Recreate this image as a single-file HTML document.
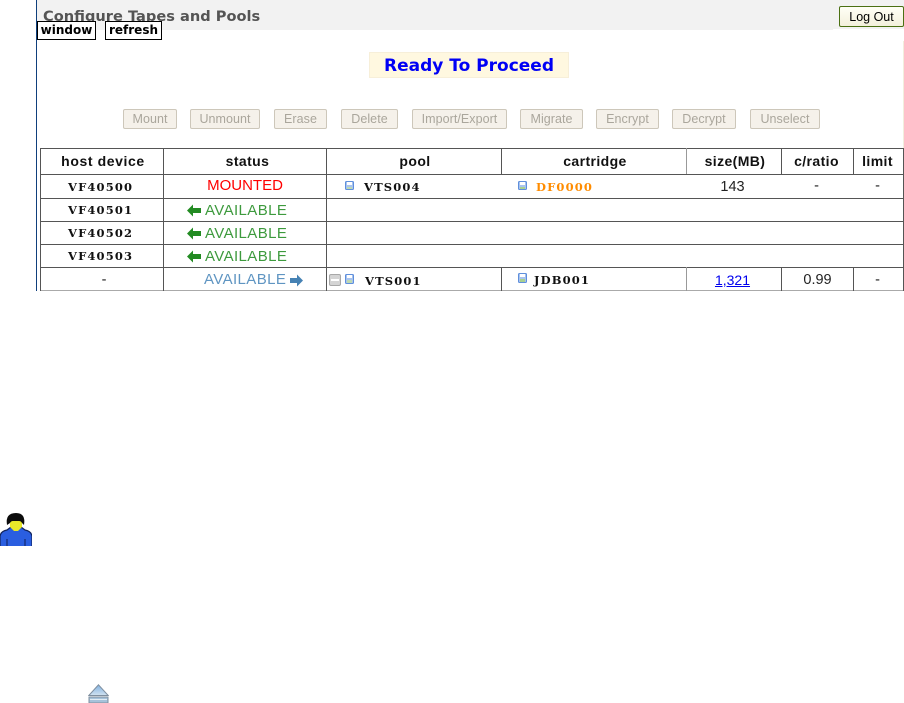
<!DOCTYPE html>
<html><head><meta charset="utf-8">
<style>
html,body{margin:0;padding:0;background:#fff;width:904px;height:703px;overflow:hidden;position:relative}
div,a,svg{position:absolute}
.t{white-space:nowrap;line-height:1}
.hl{background:#555;height:1px}
.vl{background:#555;width:1px}
.btn{top:109px;height:18px;border:1px solid #cdc7ba;border-radius:2px;background:#f5f1ea;color:#aaa69c;font:12.5px/18px "Liberation Sans",sans-serif;text-align:center;letter-spacing:.05px}
.th{top:153px;font:bold 14px/16px "Liberation Sans",sans-serif;color:#111;text-align:center;letter-spacing:.4px}
.m{font:bold 11.5px/14px "DejaVu Serif",serif;color:#111;letter-spacing:1.15px;white-space:nowrap}
.s{font:15px/16px "Liberation Sans",sans-serif;white-space:nowrap;text-align:center;letter-spacing:.4px}
.g{color:#3d9a3d}
.c{font:14.5px/16px "Liberation Sans",sans-serif;color:#222;text-align:center}
</style></head><body>
<div style="left:36px;top:0;width:1px;height:291px;background:#0f3f7c"></div>
<div style="left:37px;top:0;width:796px;height:30px;background:#f2f2f2"></div>
<div style="left:833px;top:0;width:71px;height:29px;background:#f2f2f2"></div>
<div class="t" style="left:43px;top:8px;font:bold 14.6px/17px 'DejaVu Sans',sans-serif;color:#555">Configure Tapes and Pools</div>
<div class="t" style="left:37px;top:21px;width:57px;height:17px;border:1px solid #000;background:#fff;font:bold 12px/17px 'DejaVu Sans',sans-serif;color:#000;text-align:center">window</div>
<div class="t" style="left:105px;top:21px;width:55px;height:17px;border:1px solid #000;background:#fff;font:bold 12px/17px 'DejaVu Sans',sans-serif;color:#000;text-align:center">refresh</div>
<div class="t" style="left:839px;top:6px;width:63px;height:19px;border:1px solid #4b7013;border-radius:2px;background:linear-gradient(#fffff6,#f3f0dc);font:12.5px/20px 'Liberation Sans',sans-serif;color:#000;text-align:center">Log Out</div>
<div style="left:903px;top:41px;width:1px;height:107px;background:#f2eedd"></div>

<div class="t" style="left:369px;top:52px;width:198px;height:24px;border:1px solid #f7efd9;background:#fff8e0;font:bold 17px/26px 'DejaVu Sans',sans-serif;color:#0000f5;text-align:center">Ready To Proceed</div>

<div class="btn" style="left:123px;width:52px">Mount</div>
<div class="btn" style="left:190px;width:68px">Unmount</div>
<div class="btn" style="left:274px;width:51px">Erase</div>
<div class="btn" style="left:341px;width:55px">Delete</div>
<div class="btn" style="left:412px;width:93px">Import/Export</div>
<div class="btn" style="left:520px;width:61px">Migrate</div>
<div class="btn" style="left:596px;width:61px">Encrypt</div>
<div class="btn" style="left:672px;width:62px">Decrypt</div>
<div class="btn" style="left:750px;width:68px">Unselect</div>

<!-- grid -->
<div class="hl" style="left:40px;top:148px;width:864px"></div>
<div class="hl" style="left:40px;top:174px;width:864px"></div>
<div class="hl" style="left:40px;top:198px;width:864px"></div>
<div class="hl" style="left:40px;top:221px;width:864px"></div>
<div class="hl" style="left:40px;top:244px;width:864px"></div>
<div class="hl" style="left:40px;top:267px;width:864px"></div>
<div class="hl" style="left:40px;top:290px;width:864px;background:#aaa"></div>
<div class="vl" style="left:40px;top:148px;height:143px"></div>
<div class="vl" style="left:163px;top:148px;height:143px"></div>
<div class="vl" style="left:326px;top:148px;height:143px"></div>
<div class="vl" style="left:903px;top:148px;height:143px"></div>
<div class="vl" style="left:501px;top:148px;height:26px"></div>
<div class="vl" style="left:686px;top:148px;height:26px;background:#999"></div>
<div class="vl" style="left:781px;top:148px;height:26px"></div>
<div class="vl" style="left:853px;top:148px;height:26px"></div>
<div class="vl" style="left:501px;top:267px;height:24px"></div>
<div class="vl" style="left:686px;top:267px;height:24px;background:#999"></div>
<div class="vl" style="left:781px;top:267px;height:24px"></div>
<div class="vl" style="left:853px;top:267px;height:24px"></div>

<!-- head -->
<div class="th" style="left:42px;width:122px;letter-spacing:.6px">host device</div>
<div class="th" style="left:164px;width:167px">status</div>
<div class="th" style="left:328px;width:174px">pool</div>
<div class="th" style="left:500px;width:190px">cartridge</div>
<div class="th" style="left:688px;width:94px">size(MB)</div>
<div class="th" style="left:781px;width:71px">c/ratio</div>
<div class="th" style="left:853px;width:49px">limit</div>

<!-- col 1 -->
<div class="m" style="left:68px;top:180px">VF40500</div>
<div class="m" style="left:68px;top:203px">VF40501</div>
<div class="m" style="left:68px;top:226px">VF40502</div>
<div class="m" style="left:68px;top:249px">VF40503</div>
<div class="c" style="left:43px;top:272px;width:122px">-</div>

<!-- status -->
<div class="s" style="left:164px;top:178px;width:162px;color:#f00;letter-spacing:0">MOUNTED</div>
<svg style="left:187px;top:204px" width="14" height="13" viewBox="0 0 14 13"><path d="M0 6.5 6 0.5V4H14V9H6V12.5Z" fill="#228b22"/></svg>
<div class="s g" style="left:205px;top:203px">AVAILABLE</div>
<svg style="left:187px;top:227px" width="14" height="13" viewBox="0 0 14 13"><path d="M0 6.5 6 0.5V4H14V9H6V12.5Z" fill="#228b22"/></svg>
<div class="s g" style="left:205px;top:226px">AVAILABLE</div>
<svg style="left:187px;top:250px" width="14" height="13" viewBox="0 0 14 13"><path d="M0 6.5 6 0.5V4H14V9H6V12.5Z" fill="#228b22"/></svg>
<div class="s g" style="left:205px;top:249px">AVAILABLE</div>
<div class="s" style="left:204px;top:272px;color:#5f95c2">AVAILABLE</div>
<svg style="left:290px;top:274px" width="13" height="13" viewBox="0 0 13 13"><path d="M13 6.5 7 0.5V4H0V9H7V12.5Z" fill="#4682b4"/></svg>

<!-- pool -->
<svg style="left:345px;top:181px" width="9" height="9" viewBox="0 0 9 9"><rect x=".5" y=".5" width="8" height="8" rx="1" fill="#a9c4ee" stroke="#5f8fdc"/><rect x="2" y="1" width="5" height="3" fill="#fff"/><rect x="2" y="6" width="5" height="2" fill="#bfd9b0"/></svg>
<div class="m" style="left:364px;top:180px">VTS004</div>
<svg style="left:518px;top:181px" width="9" height="9" viewBox="0 0 9 9"><rect x=".5" y=".5" width="8" height="8" rx="1" fill="#a9c4ee" stroke="#5f8fdc"/><rect x="2" y="1" width="5" height="3" fill="#fff"/><rect x="2" y="6" width="5" height="2" fill="#a8d090"/></svg>
<div class="m" style="left:536px;top:180px;color:#ff8c00">DF0000</div>

<svg style="left:329px;top:274px" width="12" height="12" viewBox="0 0 12 12"><rect x=".5" y=".5" width="11" height="11" rx="1.5" fill="#d4d4d4" stroke="#a8a8a8"/><rect x="2" y="5" width="8" height="2" fill="#fff"/></svg>
<svg style="left:345px;top:274px" width="9" height="10" viewBox="0 0 9 10"><rect x=".5" y=".5" width="8" height="9" rx="1" fill="#a9c4ee" stroke="#5f8fdc"/><rect x="2" y="1" width="5" height="3" fill="#fff"/><rect x="2" y="6" width="5" height="3" fill="#bfd9b0"/></svg>
<div class="m" style="left:365px;top:274px">VTS001</div>
<svg style="left:518px;top:273px" width="9" height="10" viewBox="0 0 9 10"><rect x=".5" y=".5" width="8" height="9" rx="1" fill="#a9c4ee" stroke="#5f8fdc"/><rect x="2" y="1" width="5" height="3" fill="#fff"/><rect x="2" y="6" width="5" height="3" fill="#a8d090"/></svg>
<div class="m" style="left:534px;top:273px">JDB001</div>

<!-- numbers -->
<div class="c" style="left:687px;top:179px;width:91px">143</div>
<div class="c" style="left:781px;top:178px;width:71px">-</div>
<div class="c" style="left:853px;top:178px;width:49px">-</div>
<div class="c" style="left:687px;top:272px;width:91px;color:#00e;text-decoration:underline;font-size:14px">1,321</div>
<div class="c" style="left:782px;top:272px;width:71px">0.99</div>
<div class="c" style="left:853px;top:272px;width:49px">-</div>

<!-- user icon -->
<svg style="left:0;top:512px" width="32" height="34" viewBox="0 0 32 34">
<path d="M0 34V24Q1 19 7 18L11 15H21L25 18Q31 19 32 24V34Z" fill="#2a5ee0"/>
<path d="M0 34V24Q1 19 7 18L11 15" fill="none" stroke="#12245c" stroke-width="1.2"/>
<path d="M32 34V24Q31 19 25 18L21 15" fill="none" stroke="#12245c" stroke-width="1.2"/>
<path d="M7 27V34M25 27V34" stroke="#14286e" stroke-width="1.2"/>
<path d="M10 8H22V15L18 19H14L10 15Z" fill="#e8e82a"/>
<path d="M7 13Q5 1 16 1Q26 1 24 13L22 11Q21 9 19 9H13Q11 9 10 11Z" fill="#0c0c0c"/>
</svg>

<!-- eject icon -->
<svg style="left:88px;top:684px" width="21" height="19" viewBox="0 0 21 19">
<defs><linearGradient id="e" x1="0" y1="0" x2="0" y2="1"><stop offset="0" stop-color="#7fb0e0"/><stop offset="1" stop-color="#d2e2f0"/></linearGradient></defs>
<path d="M10.5 .8 20.2 11.5H.8Z" fill="url(#e)" stroke="#7f8f9f"/>
<rect x="1" y="13" width="19" height="6" fill="#a6c2da" stroke="#7f8f9f"/>
<rect x="2" y="15" width="17" height="1" fill="#e3edf5"/>
</svg>
</body></html>
